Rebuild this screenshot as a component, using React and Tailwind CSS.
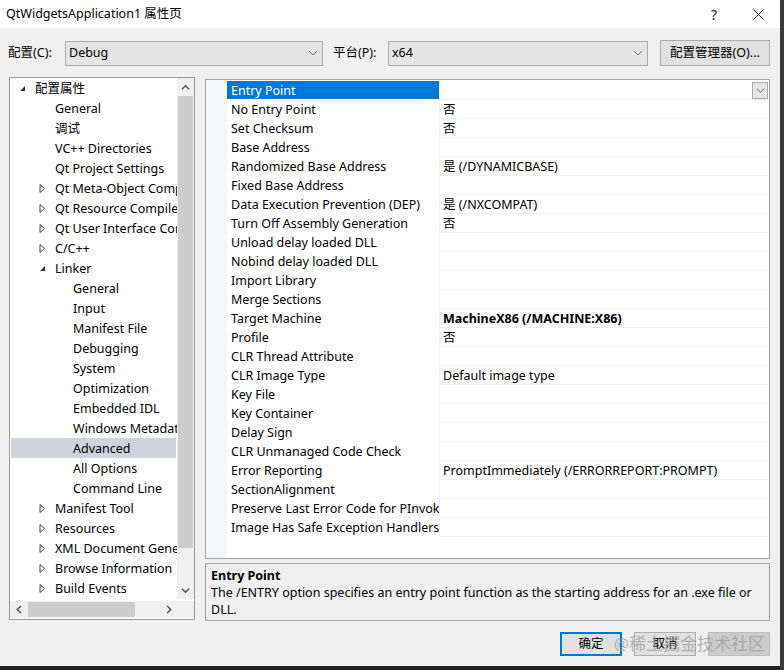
import React from "react";

const Chev = ({ dir = "down", color = "#606060", w = 1, size = 10 }) => {
  const pts = {
    down: "1,3 5,7 9,3",
    up: "1,7 5,3 9,7",
    left: "6.5,1 2.5,5 6.5,9",
    right: "3.5,1 7.5,5 3.5,9",
  }[dir];
  return (
    <svg width={size} height={size} viewBox="0 0 10 10">
      <polyline points={pts} fill="none" stroke={color} strokeWidth={w} />
    </svg>
  );
};

const OpenArrow = () => (
  <svg width="7" height="7" viewBox="0 0 7 7">
    <polygon points="6,1 6,6 1,6" fill="#333" />
  </svg>
);

const ClosedArrow = () => (
  <svg width="7" height="9" viewBox="0 0 7 9">
    <polygon points="1,0.5 5.5,4.5 1,8.5" fill="none" stroke="#444" strokeWidth="1" />
  </svg>
);

const tree = [
  { t: "配置属性", l: 0, a: "open" },
  { t: "General", l: 1 },
  { t: "调试", l: 1 },
  { t: "VC++ Directories", l: 1 },
  { t: "Qt Project Settings", l: 1 },
  { t: "Qt Meta-Object Compiler", l: 1, a: "closed" },
  { t: "Qt Resource Compiler", l: 1, a: "closed" },
  { t: "Qt User Interface Compiler", l: 1, a: "closed" },
  { t: "C/C++", l: 1, a: "closed" },
  { t: "Linker", l: 1, a: "open" },
  { t: "General", l: 2 },
  { t: "Input", l: 2 },
  { t: "Manifest File", l: 2 },
  { t: "Debugging", l: 2 },
  { t: "System", l: 2 },
  { t: "Optimization", l: 2 },
  { t: "Embedded IDL", l: 2 },
  { t: "Windows Metadata", l: 2 },
  { t: "Advanced", l: 2, sel: true },
  { t: "All Options", l: 2 },
  { t: "Command Line", l: 2 },
  { t: "Manifest Tool", l: 1, a: "closed" },
  { t: "Resources", l: 1, a: "closed" },
  { t: "XML Document Generator", l: 1, a: "closed" },
  { t: "Browse Information", l: 1, a: "closed" },
  { t: "Build Events", l: 1, a: "closed" },
];

const props = [
  ["Entry Point", ""],
  ["No Entry Point", "否"],
  ["Set Checksum", "否"],
  ["Base Address", ""],
  ["Randomized Base Address", "是 (/DYNAMICBASE)"],
  ["Fixed Base Address", ""],
  ["Data Execution Prevention (DEP)", "是 (/NXCOMPAT)"],
  ["Turn Off Assembly Generation", "否"],
  ["Unload delay loaded DLL", ""],
  ["Nobind delay loaded DLL", ""],
  ["Import Library", ""],
  ["Merge Sections", ""],
  ["Target Machine", "MachineX86 (/MACHINE:X86)", true],
  ["Profile", "否"],
  ["CLR Thread Attribute", ""],
  ["CLR Image Type", "Default image type"],
  ["Key File", ""],
  ["Key Container", ""],
  ["Delay Sign", ""],
  ["CLR Unmanaged Code Check", ""],
  ["Error Reporting", "PromptImmediately (/ERRORREPORT:PROMPT)"],
  ["SectionAlignment", ""],
  ["Preserve Last Error Code for PInvoke Calls", ""],
  ["Image Has Safe Exception Handlers", ""],
];

function TreeRow({ item }) {
  return (
    <div
      className={`h-[20px] mx-[1px] flex items-center whitespace-nowrap ${
        item.sel ? "bg-[#cfd3dc]" : ""
      }`}
    >
      {item.l === 2 ? (
        <div className="w-[62px] shrink-0" />
      ) : (
        <>
          <div className={`${item.l === 0 ? "w-[8px]" : "w-[28px]"} shrink-0`} />
          <div className="w-[16px] shrink-0 flex items-center">
            {item.a === "open" ? <OpenArrow /> : item.a === "closed" ? <ClosedArrow /> : null}
          </div>
        </>
      )}
      <span className="pt-[2px]">{item.t}</span>
    </div>
  );
}

export default function App() {
  return (
    <div className="w-[784px] h-[670px] flex bg-[#1f1f1f] overflow-hidden text-[12.5px] text-black font-[family-name:'Noto_Sans','Noto_Sans_CJK_SC',sans-serif]">
      <div className="w-[780px] h-[666px] flex flex-col bg-[#f0f0f0]">
        {/* title bar */}
        <div className="h-[28px] bg-white flex items-center shrink-0">
          <span className="pl-[6px]">QtWidgetsApplication1 属性页</span>
          <div className="ml-auto flex items-center h-full">
            <div className="w-[46px] h-full flex items-center justify-center text-[14px] text-[#222]">?</div>
            <div className="w-[43px] h-full flex items-center justify-center">
              <svg width="11" height="11" viewBox="0 0 11 11">
                <path d="M0.5 0.5 L10.5 10.5 M10.5 0.5 L0.5 10.5" stroke="#222" strokeWidth="1" />
              </svg>
            </div>
          </div>
        </div>

        {/* toolbar */}
        <div className="mt-[12px] h-[26px] flex items-center pl-[8px] shrink-0">
          <span className="w-[57px]">配置(C):</span>
          <div className="w-[258px] h-[25px] bg-[#e5e5e5] border border-[#acacac] flex items-center pl-[3px] pr-[4px]">
            <span className="flex-1">Debug</span>
            <Chev dir="down" color="#707070" />
          </div>
          <span className="ml-[10px] w-[55px]">平台(P):</span>
          <div className="w-[260px] h-[25px] bg-[#e5e5e5] border border-[#acacac] flex items-center pl-[3px] pr-[4px]">
            <span className="flex-1">x64</span>
            <Chev dir="down" color="#707070" />
          </div>
          <div className="ml-[12px] w-[110px] h-[26px] bg-[#e1e1e1] border border-[#adadad] flex items-center justify-center">
            配置管理器(O)...
          </div>
        </div>

        {/* main */}
        <div className="mt-[11px] flex items-start pl-[9px] shrink-0">
          {/* tree */}
          <div className="w-[186px] h-[543px] border border-[#9a9a9a] bg-white flex flex-col">
            <div className="flex h-[521px]">
              <div className="flex-1 overflow-hidden">
                {tree.map((it, i) => (
                  <TreeRow key={i} item={it} />
                ))}
              </div>
              <div className="w-[17px] bg-[#f0f0f0] flex flex-col">
                <div className="h-[18px] flex items-center justify-center">
                  <Chev dir="up" color="#505050" w={1.6} size={9} />
                </div>
                <div className="flex-1 flex flex-col">
                  <div className="h-[452px] mx-[1px] bg-[#cdcdcd]" />
                </div>
                <div className="h-[18px] flex items-center justify-center">
                  <Chev dir="down" color="#505050" w={1.6} size={9} />
                </div>
              </div>
            </div>
            <div className="flex h-[20px] items-center">
              <div className="flex-1 h-[17px] bg-[#f0f0f0] flex items-center">
                <div className="w-[18px] flex justify-center">
                  <Chev dir="left" color="#505050" w={1.6} size={9} />
                </div>
                <div className="w-[107px] h-[15px] bg-[#cdcdcd]" />
                <div className="flex-1" />
                <div className="w-[18px] flex justify-center">
                  <Chev dir="right" color="#505050" w={1.6} size={9} />
                </div>
              </div>
              <div className="w-[17px] h-[17px] bg-[#f0f0f0]" />
            </div>
          </div>

          {/* right column */}
          <div className="ml-[10px] w-[565px] flex flex-col">
            <div className="mt-[2px] h-[480px] border border-[#a0a0a0] bg-white flex">
              <div className="w-[21px] bg-[#f4f6f9] shrink-0" />
              <div className="flex-1 pt-[1px] flex flex-col">
                {props.map(([n, v, bold], i) => (
                  <div key={i} className="h-[19px] flex">
                    <div
                      className={`w-[212px] h-[18px] shrink-0 pl-[4px] pt-[2px] flex items-center whitespace-nowrap overflow-hidden ${
                        i === 0 ? "bg-[#0078d7] text-white" : ""
                      }`}
                    >
                      {n}
                    </div>
                    <div className="flex-1 h-[19px] border-l border-b border-[#f0f0f0] pl-[3px] flex items-center whitespace-nowrap overflow-hidden mr-[1px]">
                      <span className={`flex-1 pt-[3px] ${bold ? "font-bold" : ""}`}>{v}</span>
                      {i === 0 && (
                        <div className="w-[16px] h-[17px] bg-[#e5e5e5] border border-[#acacac] flex items-center justify-center">
                          <Chev dir="down" color="#606060" size={9} />
                        </div>
                      )}
                    </div>
                  </div>
                ))}
              </div>
            </div>
            <div className="mt-[4px] h-[58px] border border-[#a0a0a0] bg-[#f0f0f0] px-[5px] pt-[3px] leading-[17px]">
              <div className="font-bold">Entry Point</div>
              <div>
                The /ENTRY option specifies an entry point function as the starting address for an .exe file or DLL.
              </div>
            </div>
          </div>
        </div>

        {/* buttons */}
        <div className="mt-[11px] flex justify-end pr-[10px] relative">
          <div className="w-[62px] h-[24px] bg-[#e1e1e1] border-2 border-[#0078d7] flex items-center justify-center">
            确定
          </div>
          <div className="ml-[12px] w-[62px] h-[24px] bg-[#e1e1e1] border border-[#adadad] flex items-center justify-center">
            取消
          </div>
          <div className="ml-[12px] w-[62px] h-[24px] bg-[#cccccc] border border-[#bfbfbf]" />
          <div className="absolute right-[15px] top-[0px] h-[24px] flex items-center text-[17px] text-[#9a9a9a] opacity-70 pointer-events-none">
            @稀土掘金技术社区
          </div>
        </div>
      </div>
      <div className="w-[4px] h-[670px] bg-[#3a3a3a]" />
    </div>
  );
}
